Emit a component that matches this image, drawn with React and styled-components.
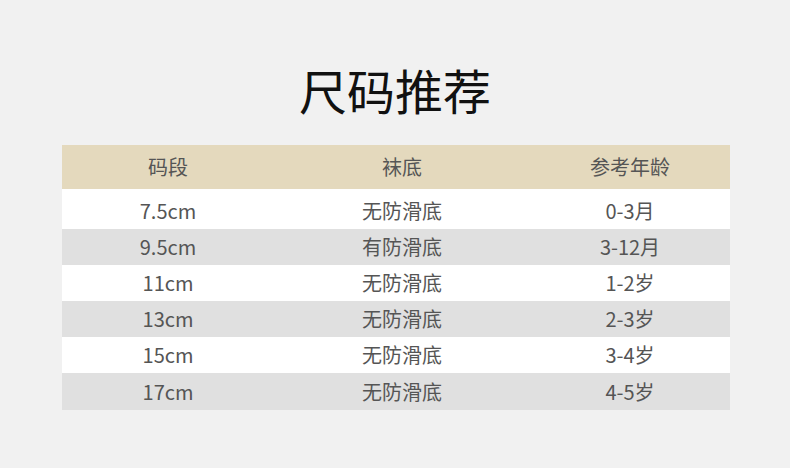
import styled, { createGlobalStyle } from "styled-components";

const GlobalStyle = createGlobalStyle`
  html, body {
    margin: 0;
    padding: 0;
    background: #f1f1f1;
  }
  body {
    font-family: "Noto Sans CJK SC", "Noto Sans", sans-serif;
  }
`;

const rows = [
  { size: "7.5cm", sole: "无防滑底", age: "0-3月" },
  { size: "9.5cm", sole: "有防滑底", age: "3-12月" },
  { size: "11cm", sole: "无防滑底", age: "1-2岁" },
  { size: "13cm", sole: "无防滑底", age: "2-3岁" },
  { size: "15cm", sole: "无防滑底", age: "3-4岁" },
  { size: "17cm", sole: "无防滑底", age: "4-5岁" },
];

const App = () => {
  return (
    <Page>
      <GlobalStyle />
      <Title>尺码推荐</Title>
      <Table>
        <HeadRow>
          <Cell>码段</Cell>
          <Cell>袜底</Cell>
          <Cell>参考年龄</Cell>
        </HeadRow>
        <Body>
          {rows.map((r, i) => (
            <Row key={i} $shaded={i % 2 === 1}>
              <Cell>{r.size}</Cell>
              <Cell>{r.sole}</Cell>
              <Cell>{r.age}</Cell>
            </Row>
          ))}
        </Body>
      </Table>
    </Page>
  );
};

const Page = styled.div`
  width: 790px;
  height: 468px;
  box-sizing: border-box;
  padding-top: 65px;
  background: #f1f1f1;
`;

const Title = styled.h1`
  margin: 0;
  height: 48px;
  font-size: 48px;
  line-height: 48px;
  font-weight: 400;
  color: #111;
  text-align: center;
`;

const Table = styled.div`
  width: 668px;
  margin: 32px 0 0 62px;
`;

const Grid = styled.div`
  display: grid;
  grid-template-columns: 212px 256px 200px;
  align-items: center;
`;

const HeadRow = styled(Grid)`
  height: 44px;
  background: #e4d9bd;
`;

const Body = styled.div`
  padding-top: 4px;
  background: #fff;
`;

const Row = styled(Grid)`
  height: 36px;
  background: ${({ $shaded }) => ($shaded ? "#e0e0e0" : "#fff")};

  &:last-child {
    height: 37px;
  }
`;

const Cell = styled.div`
  text-align: center;
  font-size: 20px;
  line-height: 36px;
  color: #555;
`;

export default App;
